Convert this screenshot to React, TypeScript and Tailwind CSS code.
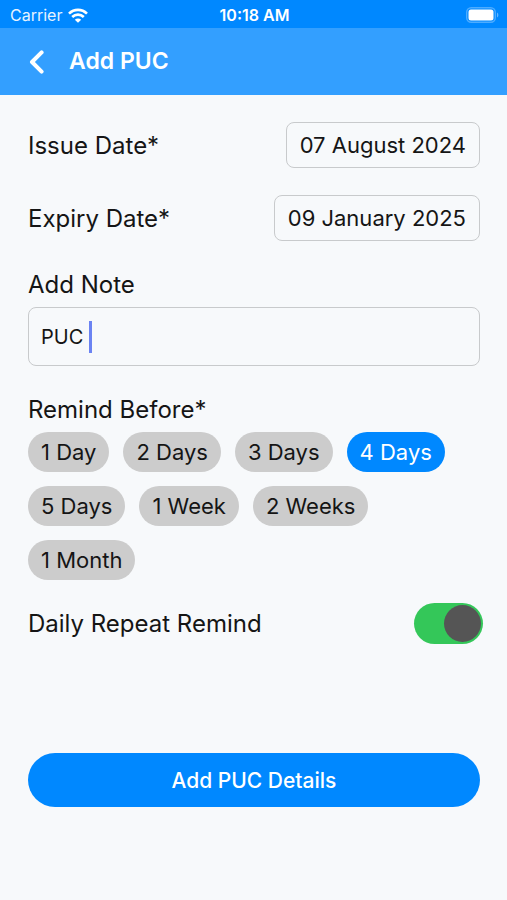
import { useState } from 'react'
import clsx from 'clsx'

const REMIND_OPTIONS = [
  '1 Day',
  '2 Days',
  '3 Days',
  '4 Days',
  '5 Days',
  '1 Week',
  '2 Weeks',
  '1 Month',
]

function WifiIcon() {
  return (
    <svg viewBox="0 0 20 15" className="h-[15px] w-5" fill="none" aria-hidden="true">
      <path d="M1 5.6C6.1.6 13.9.6 19 5.6" stroke="white" strokeWidth="2.6" />
      <path d="M4.2 9c3.3-3.2 8.3-3.2 11.6 0" stroke="white" strokeWidth="2.6" />
      <path d="M10 14.8 6.8 11.7c1.8-1.7 4.6-1.7 6.4 0z" fill="white" />
    </svg>
  )
}

function BatteryIcon() {
  return (
    <svg viewBox="0 0 33 16" className="h-4 w-[33px]" fill="none" aria-hidden="true">
      <rect x=".7" y=".7" width="28.6" height="14.6" rx="4.5" stroke="white" strokeOpacity=".3" strokeWidth="1.4" />
      <rect x="2.5" y="2.5" width="25" height="11" rx="2.5" fill="white" />
      <path d="M31 5.5c1.8.7 1.8 4.3 0 5z" fill="white" fillOpacity=".4" />
    </svg>
  )
}

function StatusBar() {
  return (
    <div className="grid h-7 grid-cols-3 items-center bg-[#0088ff] pr-2 pl-[10px] pt-[2px] font-['Inter',sans-serif] text-base text-white">
      <div className="flex items-center gap-[6px]">
        <span className="opacity-90">Carrier</span>
        <WifiIcon />
      </div>
      <span className="text-center font-semibold">10:18 AM</span>
      <div className="flex justify-end">
        <BatteryIcon />
      </div>
    </div>
  )
}

function DateField({ id, label, value }: { id: string; label: string; value: string }) {
  return (
    <div className="flex items-center justify-between">
      <label htmlFor={id} className="text-2xl/[33px]">
        {label}
      </label>
      <button
        id={id}
        type="button"
        className="h-[46px] rounded-lg border border-[#c8cacc] px-[13px]"
      >
        {value}
      </button>
    </div>
  )
}

export default function App() {
  const [note, setNote] = useState('PUC ')
  const [remind, setRemind] = useState('4 Days')
  const [daily, setDaily] = useState(true)

  return (
    <div className="min-h-screen bg-[#f7f9fb] font-['Inter',sans-serif] text-[22px] leading-[33px] text-[#151515]">
      <StatusBar />
      <header className="flex h-[67px] items-center gap-6 bg-[#339fff] px-7 text-white">
        <button type="button" aria-label="Back">
          <svg viewBox="0 0 17 24" className="h-6 w-[17px]" fill="none" aria-hidden="true">
            <path
              d="M13.6 2.4 4 12l9.6 9.6"
              stroke="white"
              strokeWidth="4"
              strokeLinecap="round"
              strokeLinejoin="round"
            />
          </svg>
        </button>
        <h1 className="text-[23px] font-semibold">Add PUC</h1>
      </header>

      <form className="pt-[27px] pr-[27px] pb-10 pl-7" onSubmit={(e) => e.preventDefault()}>
        <div className="flex flex-col gap-[27px]">
          <DateField id="issue-date" label="Issue Date*" value="07 August 2024" />
          <DateField id="expiry-date" label="Expiry Date*" value="09 January 2025" />

          <div className="flex flex-col gap-[6px]">
            <label htmlFor="note" className="text-2xl/[33px]">
              Add Note
            </label>
            <div className="relative text-xl">
              <input
                id="note"
                type="text"
                value={note}
                onChange={(e) => setNote(e.target.value)}
                className="h-[59px] w-full rounded-lg border border-[#c8cacc] px-3 caret-[#6b83f2] outline-none"
              />
              {/* text cursor, sits right behind the typed note */}
              <div className="pointer-events-none absolute inset-y-0 left-[13px] flex items-center">
                <span className="invisible whitespace-pre">{note}</span>
                <span className="h-8 w-[3px] bg-[#6b83f2]" />
              </div>
            </div>
          </div>

          <div className="flex flex-col gap-[6px]">
            <span id="remind-label" className="text-2xl/[33px]">
              Remind Before*
            </span>
            <div role="group" aria-labelledby="remind-label" className="flex flex-wrap gap-[14px]">
              {REMIND_OPTIONS.map((option) => (
                <button
                  key={option}
                  type="button"
                  aria-pressed={remind === option}
                  onClick={() => setRemind(option)}
                  className={clsx(
                    'h-10 rounded-full px-[13px]',
                    remind === option ? 'bg-[#0088ff] text-white' : 'bg-[#cccccc]',
                  )}
                >
                  {option}
                </button>
              ))}
            </div>
          </div>
        </div>

        <div className="mt-[23px] flex items-center justify-between">
          <label htmlFor="daily" className="text-2xl/[33px]">
            Daily Repeat Remind
          </label>
          <input
            id="daily"
            type="checkbox"
            role="switch"
            checked={daily}
            onChange={(e) => setDaily(e.target.checked)}
            className="-mr-[3px] flex h-[41px] w-[69px] appearance-none items-center rounded-full bg-[#cccccc] px-[2px] before:size-[37px] before:rounded-full before:bg-[#555555] checked:justify-end checked:bg-[#34c759]"
          />
        </div>

        <button
          type="submit"
          className="mt-[109px] h-[54px] w-full rounded-full bg-[#0088ff] text-[21px] font-medium text-white"
        >
          Add PUC Details
        </button>
      </form>
    </div>
  )
}
